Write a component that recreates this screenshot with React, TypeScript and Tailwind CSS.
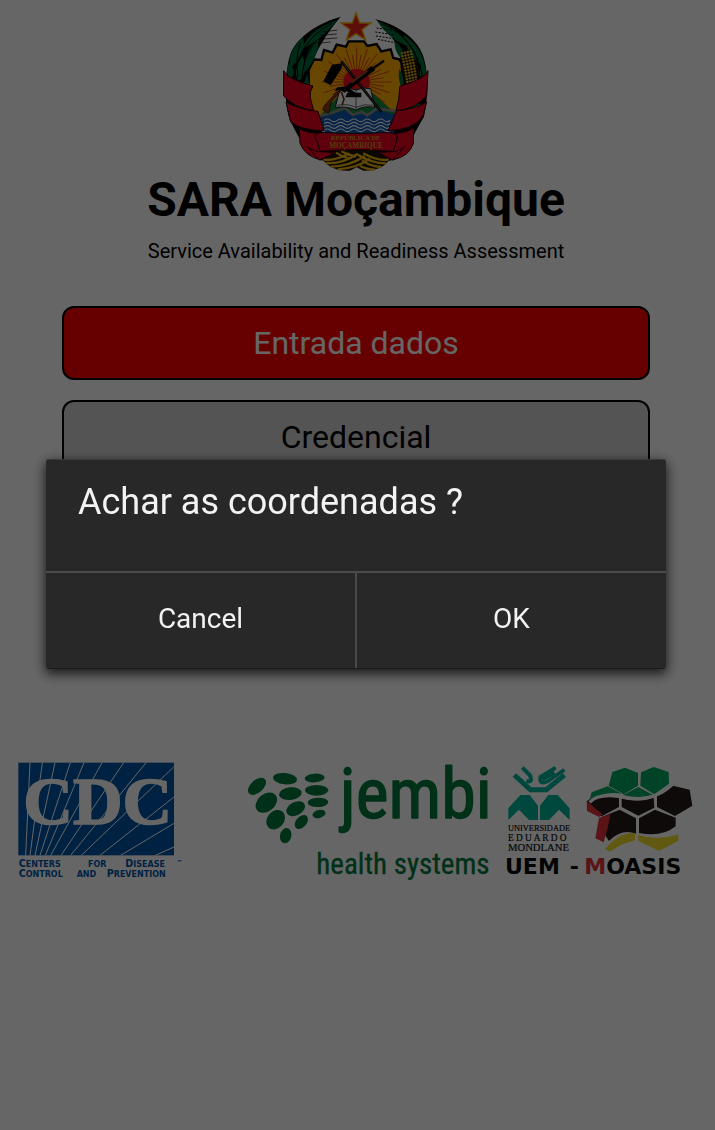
import type { ReactNode } from "react";

const RAYS = Array.from({ length: 40 }, (_, i) => i * 9);
const WAVES = [361, 371, 381, 391];

const CORN = Array.from({ length: 12 }, (_, row) =>
  [0, 1, 2, 3].map((col) => ({
    x: 398 + col * 9 + row * 1.4 + (row > 5 ? 0 : (5 - row) * -0.5),
    y: 160 + row * 8.6 - col * 2,
  })),
).flat();

function Emblem() {
  return (
    <svg
      viewBox="33 30 450 492"
      className="h-[164px] w-[150px]"
      role="img"
      aria-label="República de Moçambique"
    >
      {/* pale glow behind the leaf tips */}
      <path d="M130 178 Q136 92 212 50 L226 88 L222 130 Z" fill="#fff" />
      <path d="M390 178 Q384 92 306 50 L294 88 L298 130 Z" fill="#fff" />

      {/* dark ground that the stalks and the ribbon lie on */}
      <path
        d="M212 50C150 68 84 106 62 160 44 214 40 310 62 366 92 420 110 470 160 482L360 482C410 470 430 400 462 350 476 290 476 210 458 164 438 112 380 74 316 58 350 84 380 120 392 180L400 330 360 400H160L120 330 118 220C124 180 160 110 212 50z"
        fill="#000"
      />

      {/* cog wheel */}
      <path
        d="M132 178l22 2 8-30 26 8 12-24 28 6 8-16h46l10 14 28-6 14 22 28-6 8 26 18 4 6 10 8 80-24 118H140L116 326V210z"
        fill="#ffb000"
        stroke="#000"
        strokeWidth="7"
      />
      <g stroke="#e03a10" strokeWidth="2.6">
        {RAYS.map((a) => (
          <line key={a} x1="260" y1="206" x2="260" y2={a % 18 ? 164 : 142} transform={`rotate(${a} 260 246)`} />
        ))}
      </g>
      <circle cx="260" cy="246" r="40" fill="#ee1320" />

      {/* left stalks */}
      <g fill="#006b39">
        <path d="M200 60C150 78 108 106 98 146 134 128 172 100 200 60z" />
        <path d="M100 112C68 138 54 172 60 204 88 182 108 150 100 112z" />
        <path d="M146 116C112 142 98 180 106 216 130 186 148 152 146 116z" />
        <path d="M58 188C48 212 50 226 62 236 76 218 74 208 58 188z" />
        <path d="M98 168C74 198 72 222 86 242 106 234 110 200 98 168z" />
        <path d="M112 222l-10 26 16 8z" />
        <path d="M74 304l44 14-6 12-40-10z" />
      </g>
      <g stroke="#000" strokeWidth="3" fill="none">
        <path d="M186 70C130 100 80 150 72 240" />
        <path d="M140 124C106 160 96 200 96 250" />
        <path d="M92 128C80 160 78 190 84 230" />
        <path d="M156 96l46-6M150 106l50-4M146 118l56-4M142 130l40-4" strokeWidth="2" />
      </g>

      {/* right stalks */}
      <g fill="#006b39">
        <path d="M322 64C366 78 404 106 416 140 378 126 344 100 322 64z" />
        <path d="M400 104C440 130 464 170 464 206 432 184 408 150 400 104z" />
        <path d="M374 122C396 140 404 160 400 178 384 170 372 148 374 122z" />
        <path d="M460 190C472 210 470 226 458 238 446 224 446 210 460 190z" />
        <path d="M388 206C400 226 404 248 398 268 386 246 384 226 388 206z" />
        <path d="M398 320l60-10-20 14-42 8z" />
      </g>
      <g stroke="#000" strokeWidth="3" fill="none">
        <path d="M336 72C400 96 452 160 458 240" />
        <path d="M404 116C432 146 444 180 448 220" />
        <path d="M320 84l46 6M316 96l54 8M318 108l54 8M324 118l50 10" strokeWidth="3" strokeDasharray="6 4" />
      </g>
      <path d="M400 150 Q446 168 448 222 L420 266 Q382 226 400 150z" fill="#1a1200" />
      <g fill="#e9ae12">
        {CORN.map((c) => (
          <ellipse key={`${c.x}-${c.y}`} cx={c.x} cy={c.y} rx="4" ry="3.4" />
        ))}
      </g>

      {/* hills and sea */}
      <path d="M146 352l70-76h88l86 76z" fill="#14883e" />
      <path d="M150 352l30-6 44-16 24 16 26-8 16 10 28-18 66 16-14 56H166z" fill="#0b57ae" />
      <g stroke="#fff" strokeWidth="3.4" fill="none">
        {WAVES.map((y) => (
          <path key={y} d={`M162 ${y}q10 -8 20 0t20 0t20 0t20 0t20 0t20 0t20 0t20 0t20 0t18 0`} />
        ))}
      </g>
      <path
        d="M148 348l34-8 42-16 24 20 28-8 16 10 28-20 66 8"
        fill="none"
        stroke="#8a8a8a"
        strokeWidth="8"
      />

      {/* book */}
      <path
        d="M196 322l14-56q30-4 48 4 22-10 44-4l12 56q-32-6-56 8-26-12-62-8z"
        fill="#fff"
        stroke="#222"
        strokeWidth="3"
      />
      <path d="M258 268v60M202 316q32-6 56 6 26-12 52-6" stroke="#222" strokeWidth="2" fill="none" />
      <path d="M232 278h42v14h-48z" fill="#111" />

      {/* hoe and rifle */}
      <path d="M214 184L334 336" stroke="#000" strokeWidth="8" />
      <path d="M216 186L332 333" stroke="#56504a" strokeWidth="3" />
      <path d="M186 194l32-4-4 16-32 50-22-12z" fill="#000" />
      <path d="M342 182L270 232" stroke="#000" strokeWidth="6" />
      <path d="M304 198l12 12-92 68-14-8-16 4 8-12 24-2z" fill="#000" />
      <path d="M292 212l-48 36" stroke="#a5492a" strokeWidth="6" />
      <path d="M214 272l-28 30-10 38-18-10 4-12 38-42z" fill="#8c3a1c" stroke="#2a0d00" strokeWidth="2" />
      <path d="M236 264l30 20-8 8-30-20z" fill="#000" />
      <path d="M214 276l8 22-6 18" stroke="#6a2c18" strokeWidth="5" fill="none" />

      {/* star */}
      <path
        d="M258 38l11 31h34l-27 20 11 31-29-19-29 19 11-31-27-20h34z"
        fill="#e8251c"
        stroke="#f4b400"
        strokeWidth="4"
      />

      {/* bound stems */}
      <path d="M154 474q30 42 86 38l20-10 20 10q56 2 80-36l-50-26H206z" fill="#1a1200" />
      <g fill="none" stroke="#eeb310" strokeWidth="7">
        <path d="M160 478q30 8 78-18M168 489q46 4 96-28M182 500q60-2 102-32M204 508q58-4 96-32" />
        <path d="M356 478q-30 8-76-18M348 490q-44 0-84-26M334 501q-34-2-58-20M314 509q-28-2-44-12" />
        <path d="M198 458q20 14 40 18M214 454q20 12 44 16" />
      </g>

      {/* ribbon */}
      <g fill="#ee0022" stroke="#2b0008" strokeWidth="3">
        <path d="M41 212q10 26 88 46-12 18-8 36l10 38q-56-8-90-44z" />
        <path d="M48 306q40 24 96 28l18 58q-64 0-100-26z" />
        <path d="M88 386q24 14 60 14l-12 8 14 46 48 2-46 24q-48-12-62-50z" />
        <path d="M112 440q20 18 60 16l20 4-44 20z" />
        <path d="M474 212q-10 26-84 46l-4 40-8 34q56-4 92-44z" />
        <path d="M470 306q-40 24-90 26l-26 60q74-2 104-42z" />
        <path d="M430 384q-24 16-58 16l12 8-16 46-46 2 46 24q52-12 62-50z" />
        <path d="M404 440q-20 18-56 16l-20 4 40 20z" />
        <path d="M134 408q6-12 30-10 92 6 180 0 26-2 38 8-2 20-12 48-112-10-220 0-4-22-16-46z" />
      </g>
      <g
        fill="#d09a20"
        fontFamily="'Liberation Serif', serif"
        fontWeight="700"
        textAnchor="middle"
      >
        <text x="257" y="420" fontSize="20">REPÚBLICA DE</text>
        <text x="258" y="444" fontSize="22">MOÇAMBIQUE</text>
      </g>
    </svg>
  );
}

function CdcLogo() {
  return (
    <svg viewBox="0 0 570 390" className="h-[130px] w-[190px] shrink" role="img" aria-label="CDC">
      <rect x="25" y="23" width="467" height="278" fill="#0055a6" />
      <g stroke="#fff" strokeWidth="3">
        <path d="M60 23L47 301M97 23L60 301M135 23L75 301M181 23L90 301M222 23L106 301M276 23L122 301M341 23L153 301M408 23L182 301M491 36L214 301M492 126L270 301M492 205L332 301M492 276L436 301" />
      </g>
      <text
        x="40"
        y="208"
        fill="#fff"
        stroke="#fff"
        strokeWidth="5"
        fontFamily="'Liberation Serif', serif"
        fontWeight="700"
        fontSize="206"
      >
        CDC
      </text>
      <g fill="#0055a6" fontFamily="'DejaVu Sans', sans-serif" fontWeight="700" fontSize="24">
        <text x="26" y="335"><tspan fontSize="29">C</tspan>ENTERS</text>
        <text x="234" y="335">FOR</text>
        <text x="346" y="335"><tspan fontSize="29">D</tspan>ISEASE</text>
        <text x="500" y="328" fontSize="16">™</text>
        <text x="26" y="367"><tspan fontSize="29">C</tspan>ONTROL</text>
        <text x="200" y="367">AND</text>
        <text x="290" y="367"><tspan fontSize="29">P</tspan>REVENTION</text>
      </g>
    </svg>
  );
}

function JembiLogo() {
  const leaves = [
    [51, 94, 32, 19, -42],
    [135, 71, 36, 17, 6],
    [224, 69, 30, 13, -4],
    [79, 143, 36, 26, -40],
    [151, 116, 34, 19, -6],
    [230, 106, 35, 16, 0],
    [107, 194, 32, 25, -50],
    [167, 161, 30, 20, -28],
    [234, 142, 31, 14, -2],
    [184, 201, 24, 16, -48],
    [237, 177, 20, 12, -14],
    [137, 242, 23, 17, -75],
  ];
  return (
    <svg
      viewBox="0 0 765 390"
      className="ml-10 h-[130px] w-[255px] shrink overflow-visible"
      role="img"
      aria-label="jembi health systems"
    >
      <g fill="#007a3c" fontFamily="'Roboto Condensed', Roboto, sans-serif">
        {leaves.map(([cx, cy, rx, ry, a]) => (
          <ellipse key={`${cx}-${cy}`} cx={cx} cy={cy} rx={rx} ry={ry} transform={`rotate(${a} ${cx} ${cy})`} />
        ))}
        <text x="300" y="188" fontSize="210" stroke="#007a3c" strokeWidth="4" strokeLinejoin="round">
          jembi
        </text>
        <text x="229" y="357" fontSize="87" stroke="#007a3c" strokeWidth="1">
          health systems
        </text>
      </g>
    </svg>
  );
}

function UemLogo() {
  return (
    <svg viewBox="0 0 615 390" className="h-[130px] w-[205px] shrink" role="img" aria-label="UEM - MOASIS">
      <g fill="#00b59b">
        <path d="M40 195V160L76 120H104L129 152V195H102L72 164z" />
        <path d="M224 195V160L188 120H160L135 152V195H162L192 164z" />
      </g>
      <g fill="none" stroke="#00b59b" strokeWidth="15">
        <path d="M58 60L106 104 154 104 208 60" />
        <path d="M82 38L104 60Q116 84 94 78" strokeWidth="12" />
        <path d="M182 38L136 66Q132 90 156 80L208 44M142 74L178 52" strokeWidth="11" />
      </g>
      <g fill="#111" fontFamily="'Liberation Serif', serif" stroke="#111" strokeWidth="0.6">
        <text x="39" y="229" fontSize="25">UNIVERSIDADE</text>
        <text x="39" y="257" fontSize="28">E D U A R D O</text>
        <text x="39" y="289" fontSize="32">MONDLANE</text>
      </g>

      {/* honeycomb in the flag's colours */}
      <g>
        <path d="M352 51L390 38 429 54V92L386 118 341 92z" fill="#00a862" />
        <path d="M438 52L476 36 521 51 522 86 478 118 436 92z" fill="#00a862" />
        <path d="M282 142L290 112 338 94 380 116Q320 106 282 142z" fill="#00a862" />
        <path d="M384 120L430 96 474 120Q430 132 384 120z" fill="#00a862" />
        <path d="M276 138Q306 112 372 128L372 156 320 184 276 166z" fill="#231b19" />
        <path d="M275 138L322 178 312 186 276 168z" fill="#e0343a" />
        <path d="M380 130Q430 144 476 128L478 158 430 182 380 156z" fill="#231b19" />
        <path d="M486 124Q512 112 534 92L584 104 592 152 540 183 486 156z" fill="#231b19" />
        <path d="M320 186L374 164 423 190V236Q380 220 342 258L330 240z" fill="#231b19" />
        <path d="M432 190L480 164 542 188 542 214Q500 248 432 234z" fill="#231b19" />
        <path d="M312 188L346 178Q340 220 326 262L301 250z" fill="#e0343a" />
        <path d="M330 282Q370 232 420 234V256L382 268 344 290z" fill="#f3df2c" />
        <path d="M429 240Q484 258 550 238V258L492 288 430 258z" fill="#f3df2c" />
        <path
          d="M284 142Q306 116 372 124Q440 142 488 118Q514 106 532 88"
          fill="none"
          stroke="#fff"
          strokeWidth="10"
        />
      </g>

      <g fontFamily="'DejaVu Sans', sans-serif" fontWeight="700" fontSize="66">
        <text x="30" y="357" fill="#080808">UEM</text>
        <text x="224" y="357" fill="#080808">-</text>
        <text x="268" y="357" fill="#080808"><tspan fill="#e0343a">M</tspan>OASIS</text>
      </g>
    </svg>
  );
}

function MenuButton({ children, className }: { children: ReactNode; className: string }) {
  return (
    <button type="button" className={`h-[74px] w-full rounded-xl border-2 border-black text-[32px] leading-10 ${className}`}>
      {children}
    </button>
  );
}

export default function App() {
  return (
    <div className="min-h-screen bg-white font-[Roboto,sans-serif] text-black">
      <main className="flex min-h-screen flex-col pr-[3px]">
        <header className="flex flex-col items-center pt-[10px] text-center">
          <Emblem />
          <h1 className="text-5xl leading-[52px] font-bold">SARA Moçambique</h1>
          <p className="mt-2 text-xl leading-[34px]">Service Availability and Readiness Assessment</p>
        </header>
        <nav className="mt-[38px] flex flex-col gap-5 px-[62px]">
          <MenuButton className="bg-[#ff0000] text-white">Entrada dados</MenuButton>
          <MenuButton className="bg-[#d3d3d3] text-black">Credencial</MenuButton>
        </nav>
        <footer className="mt-[281px] flex items-start pl-[10px]">
          <CdcLogo />
          <JembiLogo />
          <UemLogo />
        </footer>
      </main>

      <div className="fixed inset-0 flex items-center justify-center bg-black/60 pr-[3px] pb-[2px]">
        <div
          role="dialog"
          aria-modal="true"
          aria-labelledby="dialog-title"
          className="mx-[46px] w-full overflow-hidden rounded-[3px] border-t border-b border-t-[#3a3a3a] border-b-[#1a1a1a] bg-[#282828] text-[#f3f3f3] shadow-[0_4px_12px_1px_rgba(0,0,0,0.75)]"
        >
          <h2 id="dialog-title" className="px-8 pt-[18px] pb-[45px] text-4xl leading-[48px]">
            Achar as coordenadas ?
          </h2>
          <div className="grid grid-cols-2 gap-0.5 bg-[#4a4a4a] pt-0.5 text-[28px] leading-8">
            <button type="button" className="h-[95px] bg-[#282828] pb-1">
              Cancel
            </button>
            <button type="button" className="h-[95px] bg-[#282828] pb-1">
              OK
            </button>
          </div>
        </div>
      </div>
    </div>
  );
}
